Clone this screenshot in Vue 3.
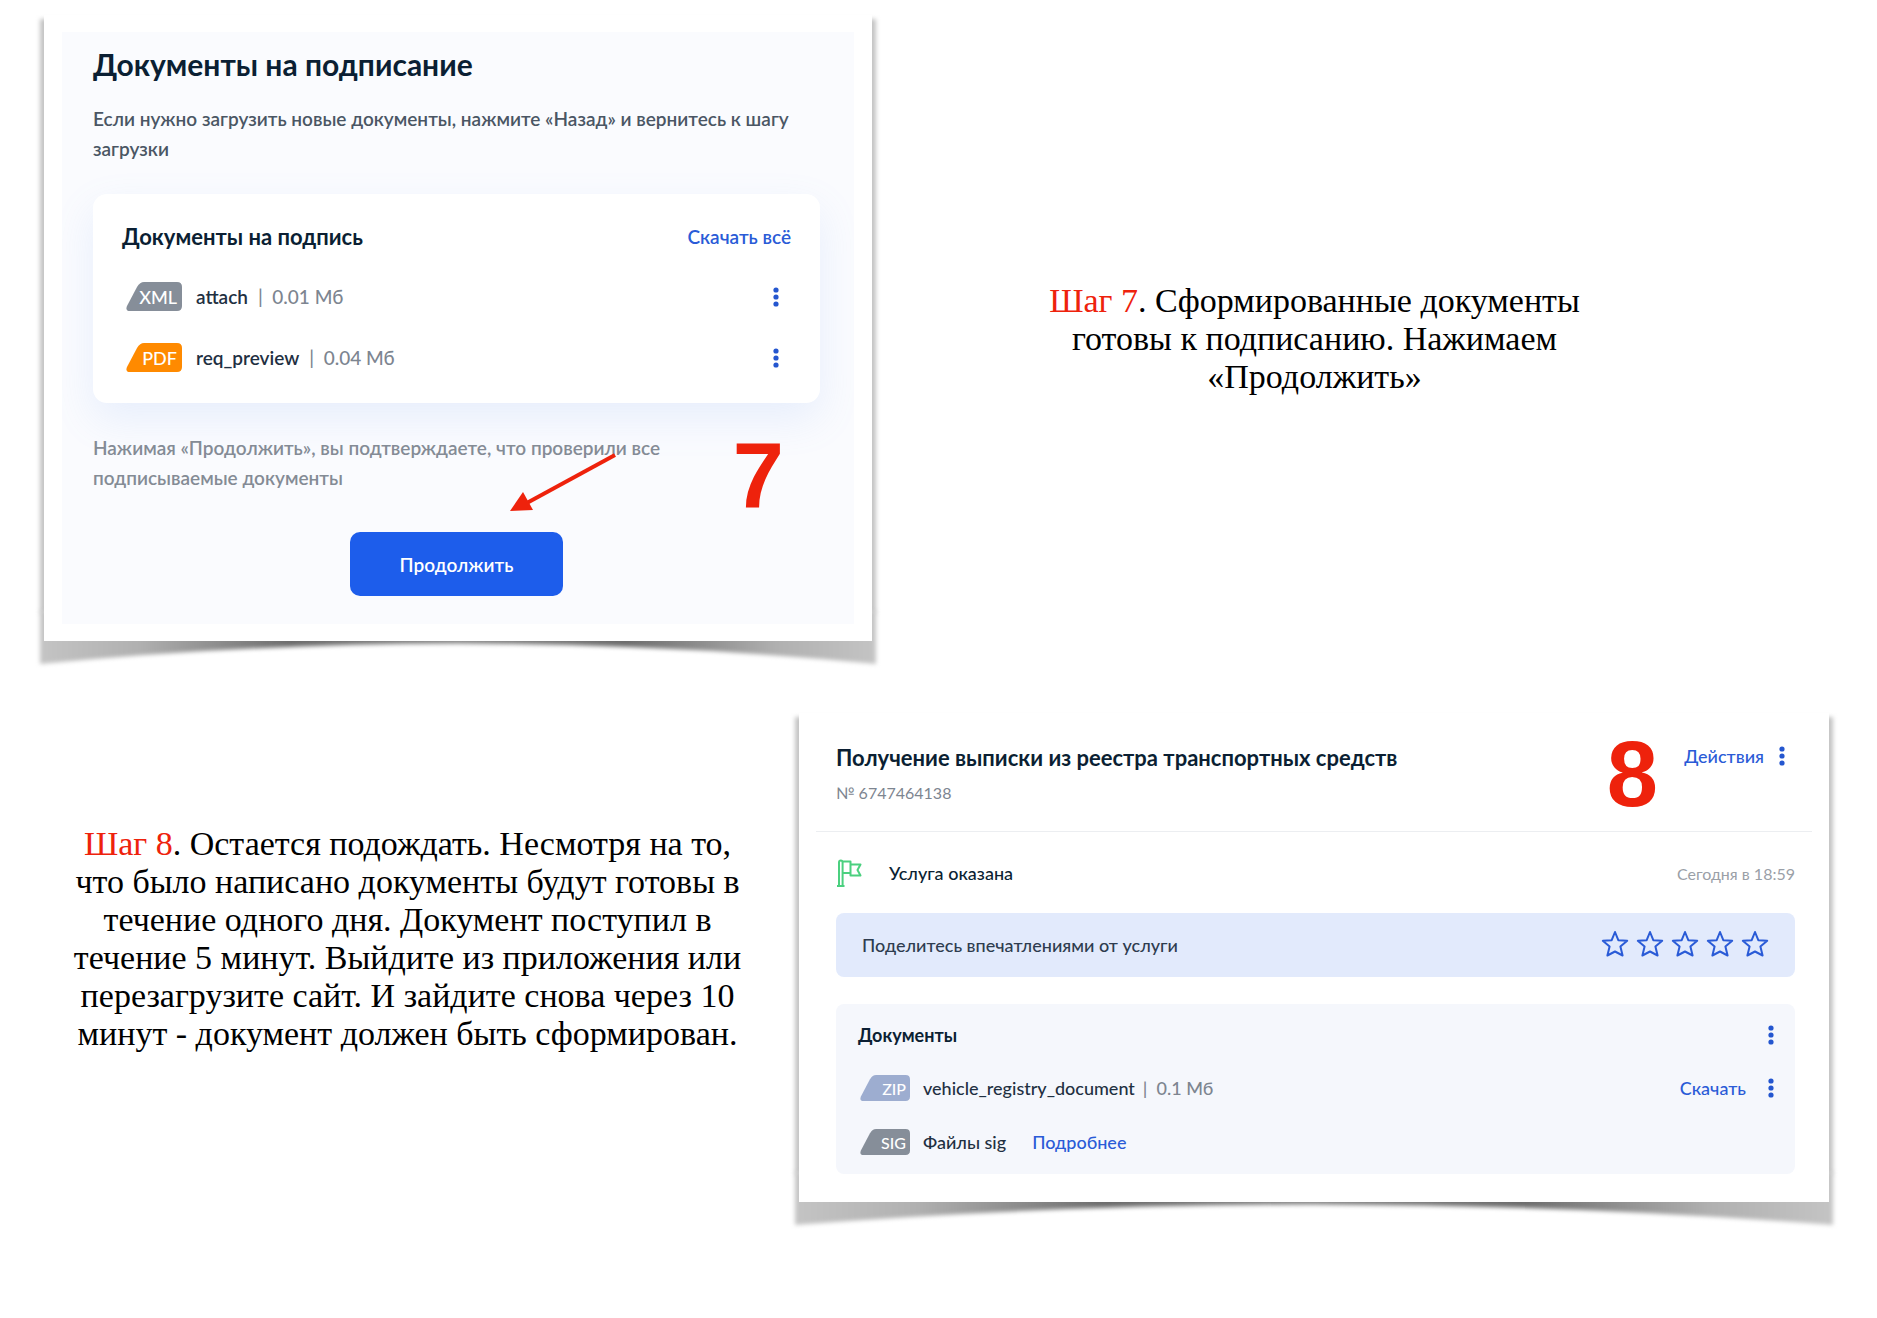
<template>
    <main class="guide">
        <section class="step step-seven">
            <div class="paper">
                <svg class="curl" viewBox="0 0 100 60" preserveAspectRatio="none" aria-hidden="true">
                    <defs>
                        <linearGradient id="curl-seven" x1="0" x2="1" y1="0" y2="0">
                            <stop v-for="stop in curlStops" :key="stop.at" :offset="stop.at" :stop-color="stop.color" />
                        </linearGradient>
                    </defs>
                    <path d="M0 0H100V53Q50 12 0 53Z" fill="url(#curl-seven)" />
                </svg>
                <div class="sheet sheet-sign">
                    <div class="sign">
                        <h1 class="sign-title">Документы на подписание</h1>
                        <p class="sign-text">Если нужно загрузить новые документы, нажмите «Назад» и вернитесь к шагу загрузки</p>
                        <div class="files">
                            <div class="files-head">
                                <h2>Документы на подпись</h2>
                                <a href="#" class="link">Скачать всё</a>
                            </div>
                            <div v-for="file in signFiles" :key="file.name" class="file">
                                <span class="badge" :class="file.type">
                                    <svg viewBox="0 0 56 29" aria-hidden="true"><path :d="badgePath" /></svg>
                                    <span>{{ file.label }}</span>
                                </span>
                                <span class="file-name">{{ file.name }}</span>
                                <span class="file-size">|&nbsp; {{ file.size }}</span>
                                <button class="dots" type="button" aria-label="Меню файла">
                                    <svg viewBox="0 0 6 20"><circle v-for="y in dotRows" :key="y" cx="3" :cy="y" r="2.6" /></svg>
                                </button>
                            </div>
                        </div>
                        <p class="sign-note">Нажимая «Продолжить», вы подтверждаете, что проверили все подписываемые документы</p>
                        <button class="submit" type="button">Продолжить</button>
                    </div>
                    <svg class="arrow" viewBox="0 0 120 70" aria-hidden="true">
                        <path d="M110 5L20 54" stroke="#ee220c" stroke-width="4" />
                        <path d="M5 61L18 42L28 60Z" fill="#ee220c" />
                    </svg>
                    <span class="mark mark-seven">7</span>
                </div>
            </div>
            <p class="caption caption-seven"><span>Шаг 7</span>. Сформированные документы готовы к подписанию. Нажимаем «Продолжить»</p>
        </section>

        <section class="step step-eight">
            <p class="caption caption-eight"><span>Шаг 8</span>. Остается подождать. Несмотря на то, что было написано документы будут готовы в течение одного дня. Документ поступил в течение 5 минут. Выйдите из приложения или перезагрузите сайт. И зайдите снова через 10 минут - документ должен быть сформирован.</p>
            <div class="paper">
                <svg class="curl" viewBox="0 0 100 60" preserveAspectRatio="none" aria-hidden="true">
                    <defs>
                        <linearGradient id="curl-eight" x1="0" x2="1" y1="0" y2="0">
                            <stop v-for="stop in curlStops" :key="stop.at" :offset="stop.at" :stop-color="stop.color" />
                        </linearGradient>
                    </defs>
                    <path d="M0 0H100V53Q50 12 0 53Z" fill="url(#curl-eight)" />
                </svg>
                <div class="sheet sheet-order">
                    <header class="order-head">
                        <div>
                            <h2 class="order-title">Получение выписки из реестра транспортных средств</h2>
                            <p class="order-number">№ 6747464138</p>
                        </div>
                        <button class="actions" type="button">
                            Действия
                            <svg viewBox="0 0 6 20"><circle v-for="y in dotRows" :key="y" cx="3" :cy="y" r="2.6" /></svg>
                        </button>
                    </header>
                    <div class="order-body">
                        <div class="status">
                            <svg class="flag" viewBox="0 0 26 28" aria-hidden="true">
                                <path d="M3 27V3.5Q3 1.5 4.8 1.5Q6.6 1.5 6.6 3.5V27M1 27H8.5M6.6 2.5H14.5V14H6.6M14.5 5.5H24.5L21.5 11L24.5 16.500H14.5V14" />
                            </svg>
                            <span class="status-name">Услуга оказана</span>
                            <time>Сегодня в 18:59</time>
                        </div>
                        <div class="rate">
                            <span>Поделитесь впечатлениями от услуги</span>
                            <div class="stars">
                                <button v-for="n in 5" :key="n" type="button" :aria-label="'Оценка ' + n" @click="rating = n">
                                    <svg viewBox="0 0 28 28" :class="{ on: n <= rating }">
                                        <path d="M14 1L17.300 9.200L26.200 9.800L19.400 15.500L21.600 24.500L14 20.500L6.400 24.500L8.600 15.500L1.800 9.800L10.700 9.200Z" />
                                    </svg>
                                </button>
                            </div>
                        </div>
                        <div class="docs">
                            <div class="docs-head">
                                <h3>Документы</h3>
                                <button class="dots" type="button" aria-label="Меню документов">
                                    <svg viewBox="0 0 6 20"><circle v-for="y in dotRows" :key="y" cx="3" :cy="y" r="2.6" /></svg>
                                </button>
                            </div>
                            <div class="doc">
                                <span class="badge zip">
                                    <svg viewBox="0 0 56 29" aria-hidden="true"><path :d="badgePath" /></svg>
                                    <span>ZIP</span>
                                </span>
                                <span class="file-name">vehicle_registry_document</span>
                                <span class="file-size">|&nbsp; 0.1 Мб</span>
                                <a href="#" class="link download">Скачать</a>
                                <button class="dots" type="button" aria-label="Меню файла">
                                    <svg viewBox="0 0 6 20"><circle v-for="y in dotRows" :key="y" cx="3" :cy="y" r="2.6" /></svg>
                                </button>
                            </div>
                            <div class="doc">
                                <span class="badge sig">
                                    <svg viewBox="0 0 56 29" aria-hidden="true"><path :d="badgePath" /></svg>
                                    <span>SIG</span>
                                </span>
                                <span class="file-name">Файлы sig</span>
                                <a href="#" class="link more">Подробнее</a>
                            </div>
                        </div>
                    </div>
                    <span class="mark mark-eight">8</span>
                </div>
            </div>
        </section>
    </main>
</template>

<script setup>
import { ref } from 'vue';

const rating = ref(0);

const signFiles = [
    { type: 'xml', label: 'XML', name: 'attach', size: '0.01 Мб' },
    { type: 'pdf', label: 'PDF', name: 'req_preview', size: '0.04 Мб' }
];

const dotRows = [3, 10, 17];

const badgePath = 'M18 0H51Q56 0 56 5V24Q56 29 51 29H4Q-1 29 1 24L11 5Q14 0 18 0Z';

const curlStops = [
    { at: 0, color: '#c4c4c4' },
    { at: 0.12, color: '#b0b0b0' },
    { at: 0.3, color: '#6c6c6c' },
    { at: 0.5, color: '#828282' },
    { at: 0.7, color: '#6c6c6c' },
    { at: 0.88, color: '#b0b0b0' },
    { at: 1, color: '#c4c4c4' }
];
</script>

<style>
body {
    margin: 0;
    background: #ffffff;
}
</style>

<style scoped>
.guide {
    display: flex;
    flex-direction: column;
    gap: 72px;
    padding: 15px 48px 112px 44px;
    font-family: Lato, 'Liberation Sans', sans-serif;
    color: #0b1f33;
}

h1,
h2,
h3,
p {
    margin: 0;
}

button {
    padding: 0;
    border: 0;
    background: none;
    font: inherit;
    cursor: pointer;
}

.step {
    display: grid;
}

.step-seven {
    grid-template-columns: 828fr 957fr;
}

.step-eight {
    grid-template-columns: 755fr 1030fr;
}

.paper {
    position: relative;
    z-index: 0;
}

.paper::before {
    content: '';
    position: absolute;
    inset: 4px -4px 28px;
    z-index: -1;
    background: #c4c4c4;
    filter: blur(2px);
}

.curl {
    position: absolute;
    left: -4px;
    bottom: -30px;
    z-index: -1;
    width: calc(100% + 8px);
    height: 60px;
    filter: blur(2px);
}

.sheet {
    position: relative;
    background: #ffffff;
}

.sheet-sign {
    padding: 17px 18px;
}

.sign {
    display: flex;
    flex-direction: column;
    padding: 12px 34px 28px 31px;
    overflow: hidden;
    background: #fafbfe;
}

.sign-title {
    font-size: 30px;
    line-height: 40px;
    font-weight: 700;
}

.sign-text,
.sign-note {
    font-size: 19px;
    line-height: 30px;
    font-weight: 600;
}

.sign-text {
    margin-top: 20px;
    color: #4a5664;
}

.sign-note {
    max-width: 680px;
    margin-top: 30px;
    color: #848b95;
}

.files {
    margin-top: 30px;
    padding: 28px 29px 15px;
    border-radius: 14px;
    background: #ffffff;
    box-shadow: 0 16px 40px rgba(120, 165, 240, 0.14);
}

.files-head,
.docs-head {
    display: flex;
    align-items: center;
    justify-content: space-between;
}

.files-head {
    margin-bottom: 14px;
    font-size: 19px;
    line-height: 30px;
}

.files-head h2 {
    font-size: 22px;
    font-weight: 700;
}

.link {
    color: #2a5bd7;
    font-weight: 500;
    text-decoration: none;
}

.files-head .link {
    font-weight: 600;
}

.file,
.doc {
    display: flex;
    align-items: center;
    font-weight: 500;
    white-space: nowrap;
}

.file {
    height: 61px;
    padding-left: 4px;
    font-size: 19px;
    font-weight: 600;
}

.file-name {
    margin: 0 10px 0 14px;
    color: #1f3042;
}

.doc .file-name {
    margin: 0 8px 0 13px;
}

.file-size {
    color: #7d8590;
    font-weight: 500;
}

.badge {
    position: relative;
    z-index: 0;
    display: flex;
    align-items: center;
    justify-content: flex-end;
    box-sizing: border-box;
    width: 56px;
    height: 29px;
    padding-right: 5px;
    font-size: 18px;
    font-weight: 500;
    color: #ffffff;
}

.badge svg {
    position: absolute;
    inset: 0;
    z-index: -1;
    width: 100%;
    height: 100%;
}

.xml,
.sig {
    fill: #868e99;
}

.pdf {
    fill: #ff8a00;
}

.zip {
    fill: #9dadd0;
}

.dots {
    display: flex;
    align-items: center;
    justify-content: center;
    width: 30px;
    height: 30px;
    margin-left: auto;
}

.dots svg,
.actions svg {
    width: 6px;
    height: 20px;
    fill: #2456cf;
}

.submit {
    align-self: center;
    width: 213px;
    height: 64px;
    margin-top: 39px;
    border-radius: 10px;
    background: #1d5deb;
    color: #ffffff;
    font-size: 19px;
    font-weight: 600;
}

.arrow {
    position: absolute;
    top: 435px;
    left: 461px;
    width: 120px;
    height: 70px;
    fill: none;
}

.mark {
    position: absolute;
    color: #ee220c;
    font-family: 'Liberation Sans', Arial, sans-serif;
    font-size: 92px;
    font-weight: 700;
    line-height: 92px;
}

.mark-seven {
    top: 414px;
    right: 88px;
}

.mark-eight {
    top: 15px;
    right: 171px;
}

.caption {
    justify-self: center;
    color: #000000;
    font-family: 'Liberation Serif', 'Times New Roman', serif;
    font-size: 34px;
    line-height: 38px;
    text-align: center;
}

.caption span {
    color: #ee220c;
}

.caption-seven {
    max-width: 560px;
    margin: 267px 72px 0 0;
}

.caption-eight {
    max-width: 676px;
    margin: 112px 28px 0 0;
}

.sheet-order {
    padding: 30px 17px 28px;
}

.order-head {
    display: flex;
    align-items: flex-start;
    justify-content: space-between;
    padding: 0 27px 26px 20px;
    border-bottom: 1px solid #eceef1;
}

.order-title {
    font-size: 22px;
    line-height: 30px;
    font-weight: 700;
}

.order-number {
    margin-top: 8px;
    color: #7d8590;
    font-size: 16px;
    line-height: 24px;
}

.actions {
    display: flex;
    align-items: center;
    gap: 15px;
    color: #2a5bd7;
    font-size: 18px;
    line-height: 26px;
    font-weight: 500;
}

.order-body {
    padding: 27px 17px 0 20px;
    font-size: 18px;
}

.status {
    display: flex;
    align-items: center;
    height: 28px;
    font-weight: 500;
}

.flag {
    width: 26px;
    height: 28px;
    margin-right: 27px;
    fill: none;
    stroke: #4bd07f;
    stroke-width: 2;
    stroke-linejoin: round;
}

.status time {
    margin-left: auto;
    color: #9aa0a7;
    font-size: 16px;
    font-weight: 400;
}

.rate {
    display: flex;
    align-items: center;
    justify-content: space-between;
    height: 64px;
    margin-top: 26px;
    padding: 0 26px;
    border-radius: 8px;
    background: #e2eafc;
    color: #2e3c4f;
    font-weight: 500;
}

.stars {
    display: flex;
    gap: 7px;
}

.stars button {
    width: 28px;
    height: 28px;
}

.stars svg {
    display: block;
    overflow: visible;
    fill: none;
    stroke: #2a5bd7;
    stroke-width: 2;
    stroke-linejoin: round;
}

.stars .on {
    fill: #2a5bd7;
}

.docs {
    margin-top: 27px;
    padding: 19px 9px 5px 22px;
    border-radius: 8px;
    background: #f5f7fc;
}

.docs-head {
    height: 24px;
    margin-bottom: 14px;
}

.docs-head h3 {
    font-size: 18px;
    font-weight: 700;
}

.doc {
    height: 54px;
    padding-left: 2px;
}

.doc .badge {
    width: 50px;
    height: 26px;
    padding-right: 4px;
    font-size: 16px;
}

.doc .download {
    margin-left: auto;
}

.doc .download + .dots {
    margin-left: 10px;
}

.doc .more {
    margin-left: 18px;
}
</style>
